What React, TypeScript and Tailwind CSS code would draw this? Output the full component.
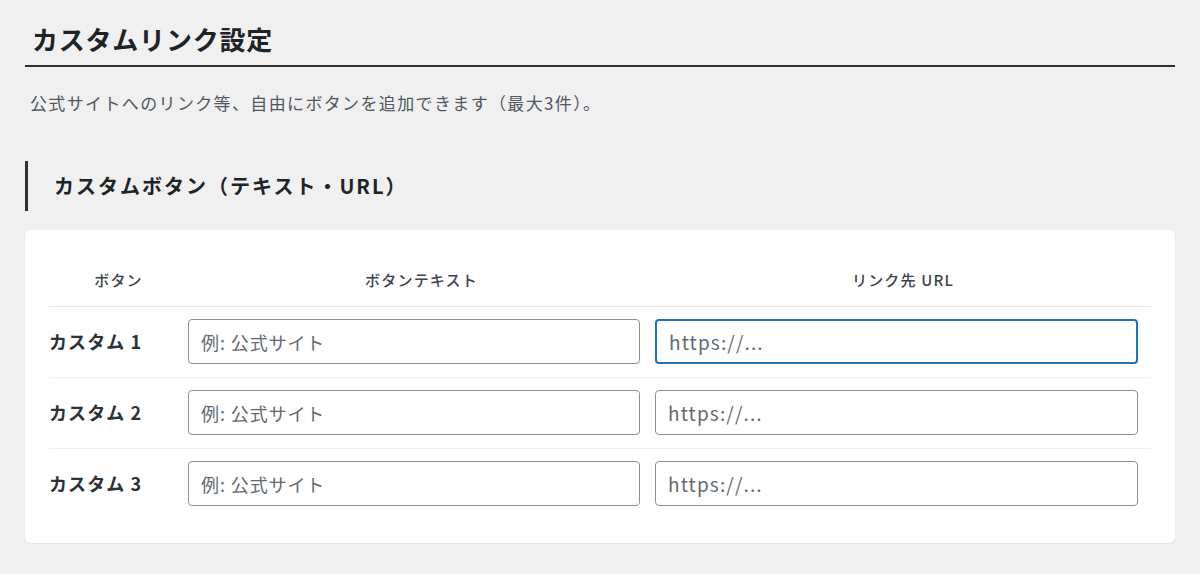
export default function App() {
  const rows = [1, 2, 3];
  return (
    <div className="min-h-[574px] w-[1200px] bg-[#f0f0f1] px-[25px] pt-[21px] text-[#1d2327]" style={{ fontFamily: '"Noto Sans CJK JP", "Noto Sans", sans-serif' }}>
      <h1 className="border-b-2 border-[#2c3338] pb-[8px] pl-[7px] text-[26px] font-bold leading-[36px] tracking-[0.03em]">カスタムリンク設定</h1>
      <p className="mt-[22px] pl-[5px] text-[17px] leading-[28px] tracking-[0.08em] text-[#50575e]">公式サイトへのリンク等、自由にボタンを追加できます（最大3件）。</p>
      <h2 className="mt-[44px] flex h-[50px] items-center border-l-[3px] border-[#2c3338] pl-[26px] text-[20px] font-bold tracking-[0.1em]">カスタムボタン（テキスト・URL）</h2>
      <div className="mt-[19px] rounded-[6px] bg-white px-[24px] pt-[26px] pb-[24px] shadow-[0_1px_2px_rgba(0,0,0,0.06)]">
        <table className="w-full border-collapse">
          <thead>
            <tr className="h-[50px] border-b border-[#e5e5e5] text-[15px] tracking-[0.08em] text-[#3c434a]">
              <th className="w-[139px] pb-[2px] text-center font-medium">ボタン</th>
              <th className="pb-[2px] text-center font-medium">ボタンテキスト</th>
              <th className="pb-[2px] text-center font-medium">リンク先 URL</th>
            </tr>
          </thead>
          <tbody>
            {rows.map((n) => (
              <tr key={n} className="h-[71px] border-b border-[#f0f0f1] last:border-b-0">
                <td className="text-[18px] font-bold tracking-[0.06em] text-[#2c3338]">カスタム {n}</td>
                <td className="pr-[15px]">
                  <input placeholder="例: 公式サイト" className="h-[45px] w-full rounded-[4px] border border-[#8c8f94] px-[12px] text-[18px] tracking-[0.05em] placeholder:text-[#646970] outline-none" />
                </td>
                <td className="pr-[13px]">
                  <input placeholder="https://..." className={`h-[45px] w-full rounded-[4px] px-[12px] text-[19px] tracking-[0.06em] placeholder:text-[#646970] outline-none ${n === 1 ? "border-2 border-[#2271b1]" : "border border-[#8c8f94]"}`} />
                </td>
              </tr>
            ))}
          </tbody>
        </table>
      </div>
    </div>
  );
}
